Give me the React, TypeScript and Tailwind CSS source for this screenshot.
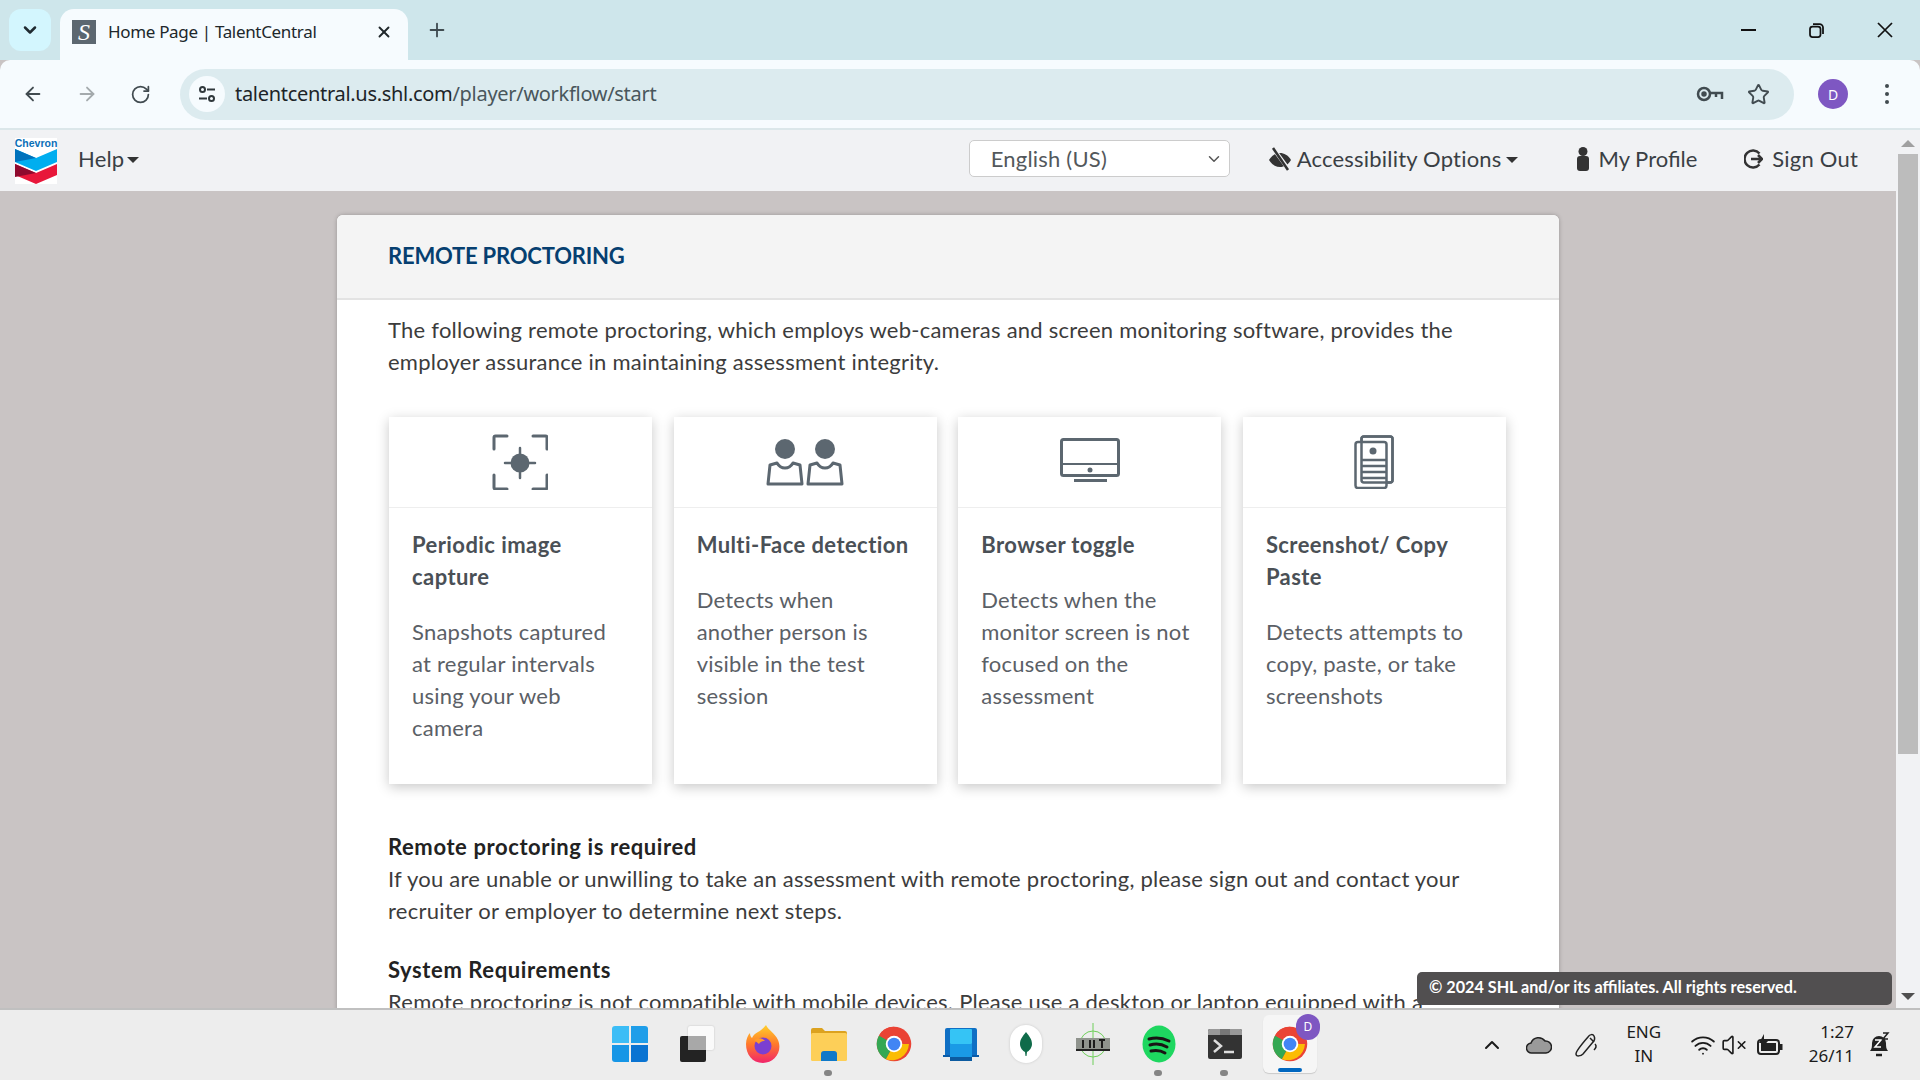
import React from "react";
import { ChevronDown, X, Plus, ArrowLeft, ArrowRight, RotateCw, Star, ChevronUp, Wifi, VolumeX } from "lucide-react";

const G = "#5c6770";

function CaptureIcon() {
  return (
    <svg width="56" height="56" viewBox="0 0 56 56" fill="none" stroke={G} strokeWidth="3" strokeLinecap="round" className="mr-[2px]">
      <path d="M2 15V3.5a1.5 1.5 0 0 1 1.5-1.5H15M41 2h12.500A1.500 1.500 0 0 1 55 3.500V15M2 41v12.500A1.500 1.500 0 0 0 3.500 55H15M41 55h12.500a1.500 1.500 0 0 0 1.500-1.500V41" />
      <circle cx="28" cy="29" r="9.500" fill={G} stroke="none" />
      <path d="M28 14v30M13 29h30" strokeWidth="2.500" />
    </svg>
  );
}
function PersonShape({ x }: { x: number }) {
  return (
    <g transform={`translate(${x} 0)`}>
      <circle cx="19" cy="11" r="10" fill={G} />
      <path d="M2 46 4 27l7-2c2 3.500 5 5 8 5s6-1.500 8-5l7 2 2 19Z" fill="none" stroke={G} strokeWidth="3" strokeLinejoin="round" />
    </g>
  );
}
function FaceIcon() {
  return (
    <svg width="78" height="48" viewBox="0 0 78 48">
      <PersonShape x={0} />
      <PersonShape x={40} />
    </svg>
  );
}
function MonitorIcon() {
  return (
    <svg width="60" height="44" viewBox="0 0 60 44" fill="none" stroke={G} strokeWidth="3" className="mb-[4px]">
      <rect x="1.500" y="1.500" width="57" height="36" rx="2" />
      <path d="M1.500 26h57" strokeWidth="2" />
      <circle cx="30" cy="32" r="2.500" fill={G} stroke="none" />
      <path d="M14 42.500h33" />
    </svg>
  );
}
function DocIcon() {
  return (
    <svg width="40" height="54" viewBox="0 0 40 54" fill="none" stroke={G} strokeWidth="2.500">
      <rect x="7.500" y="1.500" width="31" height="46" rx="2.500" />
      <rect x="1.500" y="7" width="31" height="46" rx="2.500" fill="#fff" />
      <rect x="7.500" y="1.500" width="31" height="46" rx="2.500" />
      <circle cx="19" cy="16" r="3.500" fill={G} stroke="none" />
      <path d="M8 25h24M8 31h24M8 37h24M8 43h24" />
    </svg>
  );
}

const cards = [
  { icon: <CaptureIcon />, title: "Periodic image capture", body: "Snapshots captured at regular intervals using your web camera" },
  { icon: <FaceIcon />, title: "Multi-Face detection", body: "Detects when another person is visible in the test session" },
  { icon: <MonitorIcon />, title: "Browser toggle", body: "Detects when the monitor screen is not focused on the assessment" },
  { icon: <DocIcon />, title: "Screenshot/ Copy Paste", body: "Detects attempts to copy, paste, or take screenshots" },
];

function ChevronLogo() {
  return (
    <div className="mt-[4px] flex h-[46px] w-[42px] shrink-0 flex-col items-center bg-white">
      <span className="h-[10px] text-[10.5px] leading-[10px] font-bold tracking-normal text-[#0b6fb8] font-['Liberation_Sans',sans-serif]">Chevron</span>
      <svg width="42" height="36" viewBox="0 0 42 36">
        <path d="M0 1 21 10 42 1V14L21 23 0 14Z" fill="#00aeef" />
        <path d="M0 1 21 10 0 14Z" fill="#0072bc" />
        <path d="M0 16 21 25 42 16V27L21 36 0 27Z" fill="#e8173a" />
        <path d="M0 16 21 25 0 29Z" fill="#8f0a2e" />
      </svg>
    </div>
  );
}

function ChromeLogo({ size = 36 }: { size?: number }) {
  return (
    <svg width={size} height={size} viewBox="0 0 48 48">
      <circle cx="24" cy="24" r="23" fill="#ea4335" />
      <path d="M24 24 44 24A23 23 0 0 1 13 44.200Z" fill="#fbbc04" />
      <path d="M24 24 13 44.200A23 23 0 0 1 4.100 12.500Z" fill="#34a853" />
      <path d="M24 24 4.100 12.500A23 23 0 0 1 24 1L44 13H24Z" fill="#ea4335" />
      <circle cx="24" cy="24" r="11" fill="#fff" />
      <circle cx="24" cy="24" r="8.500" fill="#4285f4" />
    </svg>
  );
}

function TaskItem({ children, dot, active }: { children: React.ReactNode; dot?: boolean; active?: boolean }) {
  return (
    <div className={`relative flex h-[58px] w-[54px] items-center justify-center rounded-md ${active ? "bg-[#f6f6f6] shadow-[0_1px_1px_rgba(0,0,0,0.15)]" : ""}`}>
      {children}
      {dot && <span className="absolute bottom-[-3px] h-[6px] w-[8px] rounded-full bg-[#858585]" />}
      {active && <span className="absolute bottom-[1px] h-[4px] w-[24px] rounded-full bg-[#0067c0]" />}
    </div>
  );
}

export default function App() {
  return (
    <div className="flex h-screen w-full flex-col overflow-hidden bg-[#c9c4c4] font-['Lato',sans-serif]">
      {/* Tab strip */}
      <div className="flex h-[60px] shrink-0 items-end bg-[#cee6eb] pl-[9px] font-['Noto_Sans',sans-serif]">
        <div className="mb-[9px] flex h-[42px] w-[42px] items-center justify-center rounded-[12px] bg-[#d3f6fe]">
          <ChevronDown size={20} strokeWidth={3} className="text-[#1f2a30]" />
        </div>
        <div className="ml-[9px] flex h-[51px] w-[348px] items-center rounded-t-[14px] bg-[#f6fbfe] pb-[5px] pl-[12px]">
          <div className="flex h-[24px] w-[24px] items-center justify-center bg-[#5c6770] text-[24px] italic leading-none text-white font-['Liberation_Serif',serif]">S</div>
          <span className="ml-[12px] w-[267px] shrink-0 text-[17px] text-[#20272b] tracking-[-0.33px]">Home Page | TalentCentral</span>
          <X size={18} strokeWidth={2.5} className="shrink-0 text-[#20272b]" />
        </div>
        <Plus size={22} strokeWidth={2} className="mb-[19px] ml-[18px] text-[#3f4b50]" />
        <div className="mb-[22px] ml-auto flex items-center text-[#111]">
          <div className="h-[2.500px] w-[15px] bg-[#111]" />
          <svg className="ml-[53px]" width="15" height="15" viewBox="0 0 15 15" fill="none" stroke="#111" strokeWidth="1.750"><rect x="1" y="3.500" width="10.500" height="10.500" rx="2.500" /><path d="M4 1h6.500A3.500 3.500 0 0 1 14 4.500V11" /></svg>
          <svg className="ml-[53px] mr-[27px]" width="16" height="16" viewBox="0 0 16 16" fill="none" stroke="#111" strokeWidth="1.750"><path d="M1 1l14 14M15 1 1 15" /></svg>
        </div>
      </div>
      {/* Toolbar */}
      <div className="flex h-[70px] shrink-0 items-center rounded-t-[10px] border-b-2 border-[#dbe7ea] bg-[#f6fbfe] pl-[22px] pr-[31px]">
        <ArrowLeft size={22} className="text-[#414b50]" />
        <ArrowRight size={22} className="ml-[32px] text-[#a4aaad]" />
        <RotateCw size={21} className="ml-[32px] text-[#414b50]" />
        <div className="ml-[29px] flex h-[51px] flex-1 items-center rounded-full bg-[#dcebef] pl-[9px] pr-[24px]">
          <div className="flex h-[36px] w-[36px] items-center justify-center rounded-full bg-[#f6fbfe]">
            <svg width="18" height="18" viewBox="0 0 18 18" fill="none" stroke="#30383c" strokeWidth="2"><circle cx="4.500" cy="4.500" r="2.500" /><path d="M9 4.500h8M1 13.500h8" /><circle cx="13.500" cy="13.500" r="2.500" /></svg>
          </div>
          <span className="ml-[10px] text-[20px] tracking-[-0.3px] text-[#1c2428] font-['Noto_Sans',sans-serif]">talentcentral.us.shl.com<span className="text-[#49565c]">/player/workflow/start</span></span>
          <svg className="ml-auto" width="28" height="18" viewBox="0 0 28 18" fill="none" stroke="#414b50" strokeWidth="2.500"><circle cx="8" cy="9" r="6" /><circle cx="8" cy="9" r="1.500" fill="#414b50" /><path d="M14 8h12v6M20 8v4" /></svg>
          <Star size={23} className="ml-[23px] text-[#414b50]" strokeWidth={2} />
        </div>
        <div className="ml-[24px] flex h-[30px] w-[30px] items-center justify-center rounded-full bg-[#7e57c2] text-[14px] text-white font-['Noto_Sans',sans-serif]">D</div>
        <div className="ml-[37px] flex flex-col gap-[4px]">
          <span className="h-[4px] w-[4px] rounded-full bg-[#414b50]" />
          <span className="h-[4px] w-[4px] rounded-full bg-[#414b50]" />
          <span className="h-[4px] w-[4px] rounded-full bg-[#414b50]" />
        </div>
      </div>
      {/* Body with scrollbar */}
      <div className="flex min-h-0 flex-1">
        <div className="flex min-w-0 flex-1 flex-col overflow-hidden">
          {/* App header */}
          <div className="flex h-[61px] shrink-0 items-center bg-[#f1f2f4] pb-[4px] pl-[15px] pr-[38px] text-[22px] tracking-[0.2px] text-[#3a3f44]">
            <ChevronLogo />
            <div className="ml-[21px] flex items-center gap-[3px]">
              Help <span className="mt-[3px] h-0 w-0 border-x-[6px] border-t-[6px] border-x-transparent border-t-[#333]" />
            </div>
            <div className="ml-auto flex h-[37px] w-[261px] items-center justify-between rounded-[5px] border border-[#cccccc] bg-white pl-[21px] pr-[6px] text-[#53585c]">
              English (US) <ChevronDown size={18} strokeWidth={2} className="text-[#555]" />
            </div>
            <div className="ml-[38px] flex items-center">
              <svg width="24" height="24" viewBox="0 0 24 24" fill="#333"><path d="M1 13c3-5 7-7 11-7s8 2 11 7c-3 5-7 7-11 7S4 18 1 13Z" /><path d="M5 1 21 23" stroke="#f1f2f4" strokeWidth="4" /><path d="M5 1 20 23" stroke="#333" strokeWidth="2.500" /></svg>
              <span className="ml-[5px]">Accessibility Options</span>
              <span className="ml-[4px] mt-[3px] h-0 w-0 border-x-[6px] border-t-[6px] border-x-transparent border-t-[#333]" />
            </div>
            <div className="ml-[58px] flex items-center tracking-normal">
              <svg width="14" height="24" viewBox="0 0 14 24" fill="#333"><circle cx="7" cy="4.500" r="4.500" /><path d="M1 12a3 3 0 0 1 3-3h6a3 3 0 0 1 3 3v9a3 3 0 0 1-3 3H4a3 3 0 0 1-3-3Z" /></svg>
              <span className="ml-[9px]">My Profile</span>
            </div>
            <div className="ml-[47px] flex items-center">
              <svg width="19" height="22" viewBox="0 0 19 22" fill="none" stroke="#333" strokeWidth="2.500"><path d="M15.500 5.500A8.500 8.500 0 1 0 15.500 16.500" /><path d="M7 11h11M14 7l4 4-4 4" /></svg>
              <span className="ml-[9px]">Sign Out</span>
            </div>
          </div>
          {/* Page */}
          <div className="relative min-h-0 flex-1 overflow-hidden">
            <div className="ml-[337px] mt-[24px] w-[1222px] rounded-t-[6px] bg-white shadow-[0_0_4px_rgba(0,0,0,0.25)]">
              <div className="flex h-[85px] items-center rounded-t-[6px] border-b-2 border-[#e3e3e3] bg-[#f4f4f4] pb-[2px] pl-[51px] text-[22px] font-bold tracking-[-0.2px] text-[#063f70]">REMOTE PROCTORING</div>
              <div className="px-[51px] pt-[14px] text-[22px] leading-[32px] tracking-[0.24px] text-[#3c3c3c]">
                <p>The following remote proctoring, which employs web-cameras and screen monitoring software, provides the employer assurance in maintaining assessment integrity.</p>
                <div className="mt-[39px] grid grid-cols-4 gap-[21.500px] pl-[1px] pr-[2px]">
                  {cards.map((c) => (
                    <div key={c.title} className="h-[367px] bg-white shadow-[0_3px_12px_rgba(0,0,0,0.22)]">
                      <div className="flex h-[91px] items-center justify-center border-b border-[#eeeeee]">{c.icon}</div>
                      <div className="px-[23px] pt-[21px]">
                        <h3 className="font-bold tracking-[0.43px] text-[#4a5056]">{c.title}</h3>
                        <p className="mt-[23px] text-[#5b6066]">{c.body}</p>
                      </div>
                    </div>
                  ))}
                </div>
                <h4 className="mt-[47px] font-bold tracking-[0.6px] text-[#222]">Remote proctoring is required</h4>
                <p>If you are unable or unwilling to take an assessment with remote proctoring, please sign out and contact your recruiter or employer to determine next steps.</p>
                <h4 className="mt-[27px] font-bold tracking-[0.6px] text-[#222]">System Requirements</h4>
                <p>Remote proctoring is not compatible with mobile devices. Please use a desktop or laptop equipped with a</p>
              </div>
            </div>
            <div className="absolute bottom-[3px] right-[4px] flex h-[33px] w-[475px] items-center rounded-[5px] bg-[#514f50] pb-[2px] pl-[12px] text-[16.200px] font-bold text-white">© 2024 SHL and/or its affiliates. All rights reserved.</div>
          </div>
        </div>
        {/* Scrollbar */}
        <div className="flex w-[24px] shrink-0 flex-col items-center bg-[#f1f2f4]">
          <span className="mt-[10px] h-0 w-0 border-x-[7px] border-b-[7px] border-x-transparent border-b-[#a0a0a0]" />
          <div className="mt-[7px] h-[600px] w-[20px] bg-[#bcbcbc]" />
          <span className="mb-[8px] mt-auto h-0 w-0 border-x-[7px] border-t-[7px] border-x-transparent border-t-[#505050]" />
        </div>
      </div>
      {/* Taskbar */}
      <div className="relative flex h-[72px] shrink-0 items-center border-t-2 border-[#c0c0c0] bg-[#ededed] font-['Noto_Sans',sans-serif] text-[#1b1b1b]">
        <div className="mb-[2px] ml-[603px] flex items-center gap-[12px]">
          <TaskItem>
            <div className="grid h-[36px] w-[36px] grid-cols-2 gap-[2px]">
              <span className="rounded-tl-[3px] bg-[#3cbdf6]" /><span className="rounded-tr-[3px] bg-[#1f9ee9]" /><span className="rounded-bl-[3px] bg-[#1696e6]" /><span className="rounded-br-[3px] bg-[#0a74d2]" />
            </div>
          </TaskItem>
          <TaskItem>
            <div className="relative ml-[3px] h-[36px] w-[36px]">
              <div className="absolute left-[8px] top-0 h-[24px] w-[26px] rounded-[2px] bg-[#fafafa] shadow-[0_0_2px_rgba(0,0,0,0.2)]" />
              <div className="absolute bottom-0 left-0 h-[26px] w-[26px] rounded-[2px] bg-[#232323]" />
              <div className="absolute left-[8px] top-[10px] h-[14px] w-[18px] bg-[#a8a8a8]" />
            </div>
          </TaskItem>
          <TaskItem>
            <svg width="34" height="38" viewBox="0 0 34 38" className="ml-[1px]">
              <defs><linearGradient id="ff" x1="0" y1="0" x2="0" y2="1"><stop offset="0" stopColor="#ffd02c" /><stop offset="0.5" stopColor="#ff7a2b" /><stop offset="1" stopColor="#f1246b" /></linearGradient></defs>
              <path d="M20 0c2 5 9 8 12 15 5 12-4 23-15 23S0 29 0 19c0-5 2-9 4-11 0 3 1 4 2 5 1-3 4-5 6-6 4-2 7-6 8-7Z" fill="url(#ff)" />
              <circle cx="17" cy="21" r="8.500" fill="#7b3fd1" />
              <path d="M8 15c4-3 9-2 11 1-3 0-5 1-6 3Z" fill="#ff9a2b" />
            </svg>
          </TaskItem>
          <TaskItem dot>
            <svg width="36" height="34" viewBox="0 0 36 34" className="ml-[1px]">
              <path d="M0 3a2 2 0 0 1 2-2h9l3 3h20a2 2 0 0 1 2 2v4H0Z" fill="#dca21f" />
              <rect y="6" width="36" height="28" rx="1.500" fill="#fdcf58" />
              <path d="M10 34v-7a3 3 0 0 1 3-3h10a3 3 0 0 1 3 3v7Z" fill="#0f79c9" />
            </svg>
          </TaskItem>
          <TaskItem><ChromeLogo /></TaskItem>
          <TaskItem>
            <svg width="36" height="34" viewBox="0 0 36 34" className="ml-[2px]">
              <path d="M2 30V3a2 2 0 0 1 2-2h28a2 2 0 0 1 2 2v27Z" fill="#0f6fc4" />
              <rect x="0" y="28" width="36" height="2" fill="#0a5ba8" />
              <rect x="7" y="2" width="22" height="15" rx="1" fill="#35c4f5" />
              <rect x="7" y="17" width="22" height="13" fill="#1a9ae6" />
              <rect x="7" y="30" width="22" height="4" fill="#0c5ba0" />
            </svg>
          </TaskItem>
          <TaskItem>
            <div className="flex h-[38px] w-[32px] items-center justify-center rounded-full bg-white shadow-[0_0_3px_rgba(0,0,0,0.15)]">
              <svg width="12" height="24" viewBox="0 0 12 24"><path d="M6 0c3 4 6 7 6 12 0 4-3 7-5 8l-.5 4h-1l-.5-4c-2-1-5-4-5-8C0 7 3 4 6 0Z" fill="#0f6b4a" /></svg>
            </div>
          </TaskItem>
          <TaskItem>
            <svg width="36" height="42" viewBox="0 0 36 42" fill="none" className="ml-[1px]">
              <circle cx="18" cy="21" r="13" stroke="#6fcf5b" strokeWidth="1" />
              <path d="M18 0v42M2 21h32" stroke="#6fcf5b" strokeWidth="1" />
              <rect x="1" y="15" width="34" height="12" fill="#8f938d" />
              <rect x="1" y="26" width="34" height="2" fill="#222" />
              <path d="M8 17v8M15 17v8M19 17v8M27 17v8M24 17h6" stroke="#1b1b1b" strokeWidth="2" />
            </svg>
          </TaskItem>
          <TaskItem dot>
            <svg width="34" height="38" viewBox="0 0 34 38" className="ml-[2px]">
              <ellipse cx="17" cy="19" rx="16.500" ry="18.500" fill="#1ed760" />
              <path d="M7 14c7-2 14-1 20 2M8 20c6-2 12-1 17 2M9 26c5-1 10-.5 14 2" stroke="#191414" strokeWidth="3" strokeLinecap="round" fill="none" />
            </svg>
          </TaskItem>
          <TaskItem dot>
            <svg width="34" height="30" viewBox="0 0 34 30" className="ml-[2px]">
              <rect width="34" height="30" rx="2" fill="#333" />
              <path d="M0 2a2 2 0 0 1 2-2h30a2 2 0 0 1 2 2v4H0Z" fill="#999" />
              <rect x="12" width="10" height="6" fill="#777" />
              <path d="M6 11l7 6-7 6" stroke="#ddd" strokeWidth="2.500" fill="none" />
              <path d="M16 23h10" stroke="#ddd" strokeWidth="2.500" />
            </svg>
          </TaskItem>
          <TaskItem active>
            <div className="relative">
              <ChromeLogo />
              <span className="absolute right-[-12px] top-[-12px] flex h-[26px] w-[24px] items-center justify-center rounded-full bg-[#7e57c2] text-[12px] text-white">D</span>
            </div>
          </TaskItem>
        </div>
        <div className="absolute inset-y-0 right-[30px] flex items-center">
          <ChevronUp size={24} strokeWidth={2} />
          <svg className="ml-[22px]" width="26" height="18" viewBox="0 0 26 18"><path d="M6 17a5 5 0 0 1-1-10 8 8 0 0 1 14-2 6 6 0 0 1 1 12Z" fill="#9a9a9a" stroke="#222" strokeWidth="1.500" /></svg>
          <svg className="ml-[22px]" width="24" height="26" viewBox="0 0 24 26" fill="none" stroke="#222" strokeWidth="1.500"><path d="M2 22c0-2 5-9 12-17 2-3 5-3 6-1s1 4-1 6L9 22c-2 2-7 3-7 0Z" /><path d="M16 6l4 4M21 12c2 2 1 4-1 6" /></svg>
          <div className="ml-[26px] flex w-[40px] flex-col items-center pb-[2px] text-[17px] leading-[24px]"><span>ENG</span><span>IN</span></div>
          <Wifi size={26} strokeWidth={1.75} className="ml-[26px]" />
          <VolumeX size={26} strokeWidth={1.5} className="ml-[5px]" />
          <svg className="ml-[10px]" width="26" height="22" viewBox="0 0 26 22"><rect x="1" y="6" width="21" height="14" rx="3" fill="none" stroke="#222" strokeWidth="2" /><rect x="4" y="9" width="15" height="8" fill="#222" /><rect x="23" y="10" width="2.500" height="6" fill="#222" /><path d="M7 0 2 9h4l-2 6 7-8H7Z" fill="#222" /></svg>
          <div className="ml-[26px] flex flex-col items-end pb-[2px] text-[17px] leading-[24px]"><span>1:27</span><span>26/11</span></div>
          <svg className="ml-[14px]" width="22" height="26" viewBox="0 0 22 26"><path d="M2 19c2-2 2-5 2-8a7 7 0 0 1 14 0c0 3 0 6 2 8Z" fill="#222" /><path d="M8 23h6" stroke="#222" strokeWidth="2.500" /><path d="M7 8h6l-6 7h6" stroke="#fff" strokeWidth="1.500" fill="none" /><path d="M15 1h5l-5 6h5" stroke="#222" strokeWidth="1.500" fill="none" /></svg>
        </div>
      </div>
    </div>
  );
}
